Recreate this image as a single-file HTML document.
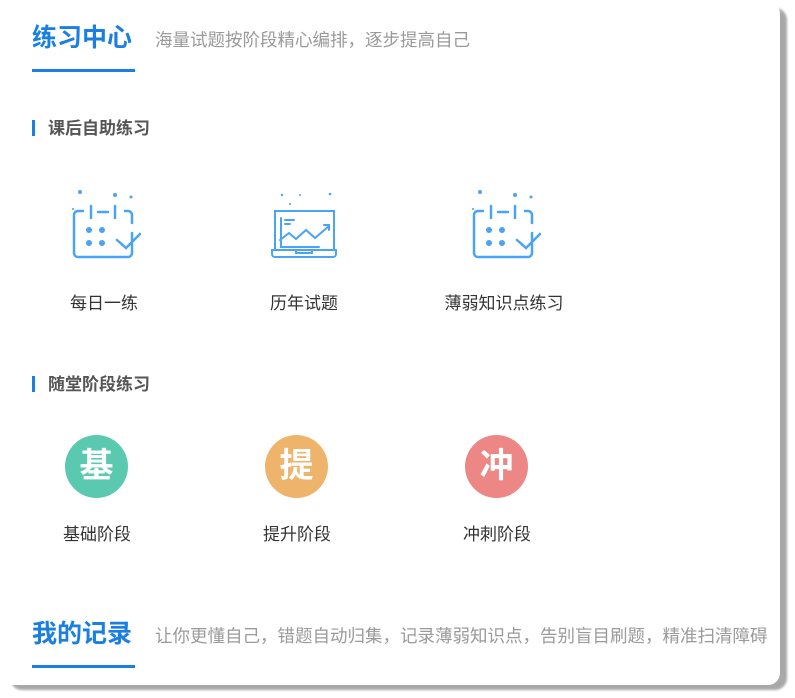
<!DOCTYPE html>
<html><head><meta charset="utf-8"><style>
*{margin:0;padding:0;box-sizing:border-box}
body{width:795px;height:698px;background:#fff;position:relative;overflow:hidden;font-family:"Liberation Sans","Noto Sans CJK SC",sans-serif}
.shadow{position:absolute;left:10px;top:8px;width:777px;height:682px;background:#a8a8a8;border-radius:12px;filter:blur(1px)}
.card{position:absolute;left:0;top:0;width:780px;height:685px;background:#fff;border-radius:0 0 12px 0;border-top-right-radius:14px}
.abs{position:absolute;white-space:nowrap}
.h{font-size:25px;font-weight:bold;color:#1a7fe0;line-height:28px}
.sub{font-size:17.5px;color:#9a9a9a;line-height:20px}
.ul{height:3px;background:#1a7fe0;width:103px;left:32px}
.bar{left:32px;width:3px;height:16px;background:#1a7fe0}
.sec{left:48px;font-size:17px;font-weight:bold;color:#555;line-height:20px}
.lbl{font-size:17px;color:#333;line-height:20px;transform:translateX(-50%)}
.c{width:63px;height:63px;border-radius:50%;color:#fff;font-size:34px;font-weight:bold;text-align:center;line-height:63px}
</style></head><body>
<div class="shadow"></div>
<div class="card"></div>
<div class="abs h" style="left:32px;top:24px">练习中心</div>
<div class="abs sub" style="left:155px;top:30px">海量试题按阶段精心编排，逐步提高自己</div>
<div class="abs ul" style="top:69px"></div>
<div class="abs bar" style="top:120px"></div>
<div class="abs sec" style="top:119px">课后自助练习</div>

<svg class="abs" style="left:60px;top:185px" width="90" height="80" viewBox="0 0 90 80" fill="none" stroke="#4aa3f5" stroke-width="2.5" stroke-linecap="round">
<path d="M23 26h-5a4 4 0 0 0-4 4v38a4 4 0 0 0 4 4h50a4 4 0 0 0 4-4v-20M72 38v-8a4 4 0 0 0-4-4h-3"/>
<path d="M31 21v12M55 21v12M38 27h10M57 55l9 8 14-14"/>
<g fill="#4aa3f5" stroke="none"><circle cx="29" cy="45" r="3"/><circle cx="42" cy="45" r="3"/><circle cx="29" cy="58" r="3"/><circle cx="42" cy="58" r="3"/><circle cx="20" cy="7" r="2"/><circle cx="55" cy="10" r="2"/><circle cx="71" cy="12" r="1.5"/><circle cx="13" cy="24" r="1"/></g>
</svg>
<svg class="abs" style="left:260px;top:185px" width="90" height="80" viewBox="0 0 90 80" fill="none" stroke="#4aa3f5" stroke-width="2" stroke-linecap="round">
<path d="M15 64V26h59v38M12 65h64v4a3 3 0 0 1-3 3H15a3 3 0 0 1-3-3z M36 65v3h16v-3"/>
<path d="M21 33v29h38M25 35h9M25 39h5M20 55l9-7 7 6 10-9 9 8 14-12M64 40h5v5"/>
<g fill="#4aa3f5" stroke="none"><circle cx="22" cy="10" r="1.2"/><circle cx="40" cy="10" r="1"/><circle cx="70" cy="9" r="1.3"/><circle cx="30" cy="19" r="1"/></g>
</svg>
<svg class="abs" style="left:460px;top:185px" width="90" height="80" viewBox="0 0 90 80" fill="none" stroke="#4aa3f5" stroke-width="2.5" stroke-linecap="round">
<path d="M23 26h-5a4 4 0 0 0-4 4v38a4 4 0 0 0 4 4h50a4 4 0 0 0 4-4v-20M72 38v-8a4 4 0 0 0-4-4h-3"/>
<path d="M31 21v12M55 21v12M38 27h10M57 55l9 8 14-14"/>
<g fill="#4aa3f5" stroke="none"><circle cx="29" cy="45" r="3"/><circle cx="42" cy="45" r="3"/><circle cx="29" cy="58" r="3"/><circle cx="42" cy="58" r="3"/><circle cx="20" cy="7" r="2"/><circle cx="55" cy="10" r="2"/><circle cx="71" cy="12" r="1.5"/><circle cx="13" cy="24" r="1"/></g>
</svg>
<div class="abs lbl" style="left:104px;top:294px">每日一练</div>
<div class="abs lbl" style="left:304px;top:294px">历年试题</div>
<div class="abs lbl" style="left:504px;top:294px">薄弱知识点练习</div>

<div class="abs bar" style="top:376px"></div>
<div class="abs sec" style="top:375px">随堂阶段练习</div>
<div class="abs c" style="left:65px;top:435px;background:#5ac9b0">基</div>
<div class="abs c" style="left:265px;top:435px;background:#efb46b">提</div>
<div class="abs c" style="left:465px;top:435px;background:#ed8785">冲</div>
<div class="abs lbl" style="left:97px;top:525px">基础阶段</div>
<div class="abs lbl" style="left:297px;top:525px">提升阶段</div>
<div class="abs lbl" style="left:497px;top:525px">冲刺阶段</div>

<div class="abs h" style="left:32px;top:620px">我的记录</div>
<div class="abs sub" style="left:155px;top:626px">让你更懂自己，错题自动归集，记录薄弱知识点，告别盲目刷题，精准扫清障碍</div>
<div class="abs ul" style="top:665px"></div>
</body></html>
